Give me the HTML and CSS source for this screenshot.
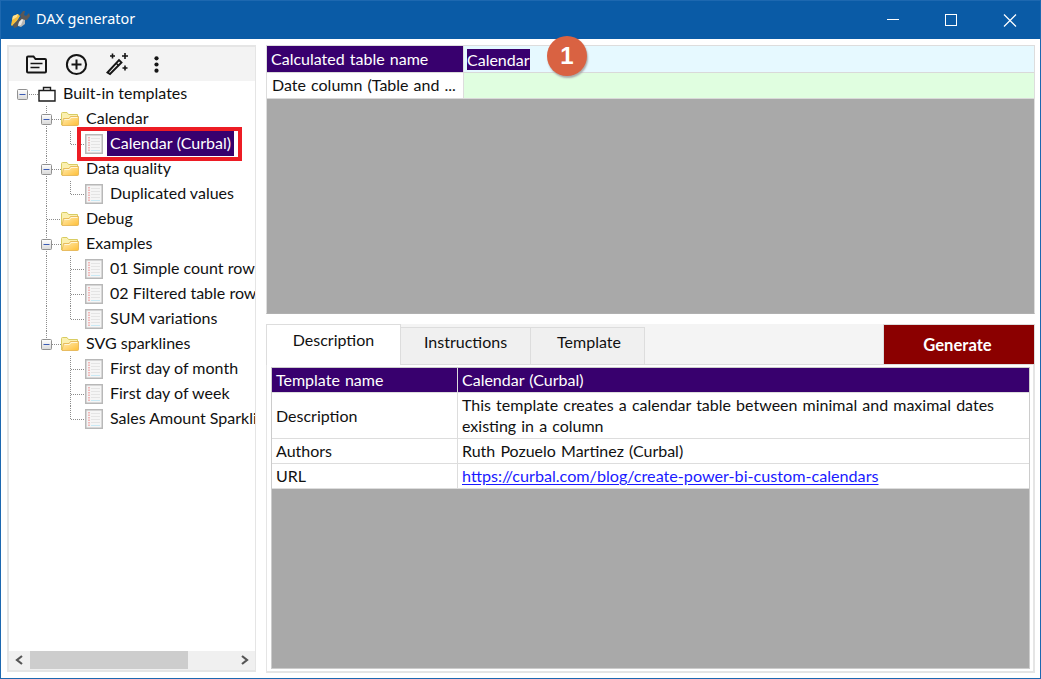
FILE: index.html
```html
<!DOCTYPE html>
<html lang="en">
<head>
<meta charset="utf-8">
<title>DAX generator</title>
<link rel="stylesheet" href="styles.css">
</head>
<body>
<svg class="defs" width="0" height="0">
  <defs>
    <linearGradient id="gold" x1="0" y1="0" x2="1" y2="1"><stop offset="0" stop-color="#ffeeb8"/><stop offset="1" stop-color="#ffbf36"/></linearGradient>
    <linearGradient id="boxfill" x1="0" y1="0" x2="0" y2="1"><stop offset="0" stop-color="#fff"/><stop offset="1" stop-color="#d8d8d8"/></linearGradient>
    <symbol id="minus" viewBox="0 0 11 11"><rect x=".5" y=".5" width="10" height="10" rx="1" fill="url(#boxfill)" stroke="#919191"/><path d="M2.500 5.500h6" stroke="#3c5cb4"/></symbol>
    <symbol id="folder" viewBox="0 0 18 14"><path d="M.5 13V1.500Q.5.5 1.500.5H6l1.500 2H16.500V5" fill="#fbf0b0" stroke="#d8cc62"/><path d="M1 13.500L2.500 6.500H8l1.500-2h8v8q0 1-1 1z" fill="url(#gold)" stroke="#e2b14c" stroke-width=".8"/><path d="M3.500 7.500h5L10 5.500h6.500" fill="none" stroke="#fff6d8"/></symbol>
    <symbol id="doc" viewBox="0 0 18 20"><rect x=".75" y=".75" width="16.500" height="18.500" fill="#f5f5f5" stroke="#b8b8b8" stroke-width="1.500"/><path d="M4 3v14" stroke="#f0a4a4" stroke-width="1.500" stroke-dasharray="1.500 1"/><path d="M6 4.500h9M6 7.500h9M6 10.500h9M6 13.500h9" stroke="#e4e4e4"/><path d="M6 16.500h9" stroke="#c9e9f5"/></symbol>
    <symbol id="case" viewBox="0 0 18 16"><path d="M1 4.500h16v10.500H1zM5.500 4V1.500h7V4" fill="none" stroke="#1c1c1c" stroke-width="1.400"/></symbol>
  </defs>
</svg>
<div class="window">
  <header class="titlebar">
    <svg class="app-icon" width="20" height="20" viewBox="0 0 20 20"><path d="M3 6l5-2 2 2-3 5-5 5-1-1z" fill="#f5bd3b"/><path d="M3 6l5-2-1 3-5 3z" fill="#ffe191"/><path d="M3 15l8-8-1-2 3-4 2 0-1 4 2 1 3-3 1 3-3 4-3 0-7 7-3 1z" fill="#5b5856"/><path d="M9 12l3-3 3 1v4l-4 3-3-1z" fill="#b5b5b3"/><path d="M9 12l3-3 1 1-2 5-3 1z" fill="#e9e9e6"/></svg>
    <h1>DAX generator</h1>
    <svg class="caption" width="160" height="38" viewBox="0 0 160 38" fill="none" stroke="#fff"><path d="M7 18.500h12"/><rect x="65.500" y="13.500" width="11" height="11"/><path d="M124 13.500l12 12M136 13.500l-12 12" stroke-width="1.200"/></svg>
  </header>
  <main class="content">
    <aside class="sidebar">
      <nav class="toolbar">
        <svg width="150" height="34" viewBox="0 0 150 34" fill="none" stroke="#151515" stroke-width="2">
          <path d="M18 10.500q0-1 1-1h5.500l2 2.500H36q1 0 1 1v11.500q0 1-1 1H19q-1 0-1-1z"/><path d="M21.500 16.500h12M21.500 20.500h9" stroke-width="1.700"/>
          <circle cx="67.500" cy="17.500" r="9.600"/><path d="M67.500 12.500v10M62.500 17.500h10"/>
          <path d="M98.500 25.500L110 13l2.500 2.500L101 27z" stroke-width="1.900"/><path d="M107 16l2.700 2.700" stroke-width="1.500"/>
          <path d="M103.500 6.500v5M101 9h5M116 6v6M113 9h6M116 18.500v5M113.500 21h5" stroke-width="1.600"/>
          <g fill="#151515" stroke="none"><circle cx="147.500" cy="11.300" r="2.100"/><circle cx="147.500" cy="17.500" r="2.100"/><circle cx="147.500" cy="23.700" r="2.100"/></g>
        </svg>
      </nav>
      <ul class="tree">
        <li><svg width="51" height="25"><path class="guide" d="M20 13.500h9"/><use href="#minus" x="8" y="8" width="11" height="11"/><use href="#case" x="29" y="5" width="18" height="16"/></svg><span>Built-in templates</span></li>
        <li><svg width="74" height="25"><path class="guide" d="M37.500 0V25M43 13.500h9"/><use href="#minus" x="32" y="8" width="11" height="11"/><use href="#folder" x="52" y="6" width="18" height="14"/></svg><span>Calendar</span></li>
        <li><svg width="98" height="25"><path class="guide" d="M37.500 0V25M61.500 0V13.500H76"/><use href="#doc" x="76" y="3" width="18" height="20"/></svg><span class="selected">Calendar (Curbal)</span></li>
        <li><svg width="74" height="25"><path class="guide" d="M37.500 0V25M43 13.500h9"/><use href="#minus" x="32" y="8" width="11" height="11"/><use href="#folder" x="52" y="6" width="18" height="14"/></svg><span>Data quality</span></li>
        <li><svg width="98" height="25"><path class="guide" d="M37.500 0V25M61.500 0V13.500H76"/><use href="#doc" x="76" y="3" width="18" height="20"/></svg><span>Duplicated values</span></li>
        <li><svg width="74" height="25"><path class="guide" d="M37.500 0V25M38 13.500h14"/><use href="#folder" x="52" y="6" width="18" height="14"/></svg><span>Debug</span></li>
        <li><svg width="74" height="25"><path class="guide" d="M37.500 0V25M43 13.500h9"/><use href="#minus" x="32" y="8" width="11" height="11"/><use href="#folder" x="52" y="6" width="18" height="14"/></svg><span>Examples</span></li>
        <li><svg width="98" height="25"><path class="guide" d="M37.500 0V25M61.500 0V25M62 13.500H76"/><use href="#doc" x="76" y="3" width="18" height="20"/></svg><span>01 Simple count rows</span></li>
        <li><svg width="98" height="25"><path class="guide" d="M37.500 0V25M61.500 0V25M62 13.500H76"/><use href="#doc" x="76" y="3" width="18" height="20"/></svg><span>02 Filtered table rows</span></li>
        <li><svg width="98" height="25"><path class="guide" d="M37.500 0V25M61.500 0V13.500H76"/><use href="#doc" x="76" y="3" width="18" height="20"/></svg><span>SUM variations</span></li>
        <li><svg width="74" height="25"><path class="guide" d="M37.500 0V8M43 13.500h9"/><use href="#minus" x="32" y="8" width="11" height="11"/><use href="#folder" x="52" y="6" width="18" height="14"/></svg><span>SVG sparklines</span></li>
        <li><svg width="98" height="25"><path class="guide" d="M61.500 0V25M62 13.500H76"/><use href="#doc" x="76" y="3" width="18" height="20"/></svg><span>First day of month</span></li>
        <li><svg width="98" height="25"><path class="guide" d="M61.500 0V25M62 13.500H76"/><use href="#doc" x="76" y="3" width="18" height="20"/></svg><span>First day of week</span></li>
        <li><svg width="98" height="25"><path class="guide" d="M61.500 0V13.500H76"/><use href="#doc" x="76" y="3" width="18" height="20"/></svg><span>Sales Amount Sparkli</span></li>
      </ul>
      <div class="scrollbar">
        <svg width="21" height="18" viewBox="0 0 21 18"><path d="M13 5l-5 4 5 4" fill="none" stroke="#555" stroke-width="2.200"/></svg>
        <div class="thumb"></div>
        <svg class="end" width="21" height="18" viewBox="0 0 21 18"><path d="M8 5l5 4-5 4" fill="none" stroke="#555" stroke-width="2.200"/></svg>
      </div>
    </aside>
    <section class="right">
      <div class="params">
        <div class="param head"><div class="name">Calculated table name</div><div class="value blue"><span class="edit">Calendar</span></div></div>
        <div class="param"><div class="name second">Date column (Table and ...</div><div class="value green"></div></div>
      </div>
      <div class="details">
        <div class="tabs">
          <div class="tab active">Description</div>
          <div class="tab instr">Instructions</div>
          <div class="tab templ">Template</div>
          <div class="filler"></div>
          <button class="generate">Generate</button>
        </div>
        <div class="page">
          <div class="info">
            <div class="row top"><div class="key">Template name</div><div class="val">Calendar (Curbal)</div></div>
            <div class="row tall"><div class="key">Description</div><div class="val">This template creates a calendar table between minimal and maximal dates<br>existing in a column</div></div>
            <div class="row"><div class="key">Authors</div><div class="val">Ruth Pozuelo Martinez (Curbal)</div></div>
            <div class="row"><div class="key">URL</div><div class="val"><a href="#">https://curbal.com/blog/create-power-bi-custom-calendars</a></div></div>
          </div>
        </div>
      </div>
    </section>
  </main>
  <div class="highlight"></div>
  <div class="step">1</div>
</div>
</body>
</html>
```
FILE: styles.css
```css
* { box-sizing: border-box; }
body { margin: 0; font: 16px/21px Lato, "Liberation Sans", sans-serif; color: #111; }
.defs { position: absolute; }
.window { position: relative; display: flex; flex-direction: column; width: 1041px; height: 679px; background: #fff; border: 1px solid #1d68b0; overflow: hidden; }
.titlebar { display: flex; align-items: center; height: 38px; flex: none; padding-left: 9px; background: #0a5ba6; color: #fff; }
.app-icon { flex: none; margin-right: 6px; }
.titlebar h1 { flex: 1; margin: 0; padding-bottom: 2px; font: 14.400px/36px "Noto Sans", sans-serif; }
.content { display: flex; flex: 1; min-height: 0; padding: 6px 5px 6px 6px; gap: 10px; }
.sidebar { display: flex; flex-direction: column; width: 249px; height: 627px; border: 2px solid #e5e5e5; border-right-width: 1px; }
.toolbar { height: 34px; flex: none; background: #f3f3f3; }
.toolbar svg { display: block; width: 150px; height: 34px; overflow: visible; }
.tree { flex: 1; margin: 0; padding: 0; list-style: none; overflow: hidden; }
.tree li { display: flex; height: 25px; white-space: nowrap; line-height: 23px; }
.tree svg { flex: none; }
.tree li span { height: 25px; padding: 0 3px; flex: none; }
.guide { fill: none; stroke: #8c8c8c; stroke-dasharray: 1 1; }
.tree .selected { background: #38006e; color: #fff; word-spacing: .5px; }
.scrollbar { display: flex; height: 19px; flex: none; background: #f0f0f0; border-bottom: 1px solid #f0f0f0; }
.thumb { width: 158px; background: #cdcdcd; }
.end { margin-left: auto; }
.right { display: flex; flex-direction: column; width: 769px; gap: 10px; }
.params { height: 269px; background: #a9a9a9; border: 1px solid #ddd; border-bottom-color: #b0b0b0; }
.param { display: flex; height: 26px; border-bottom: 1px solid #d9d9d9; background: #fff; line-height: 25px; word-spacing: 1px; }
.param.head { height: 27px; }
.name { width: 197px; padding-left: 4px; border-right: 1px solid #ddd; white-space: nowrap; }
.head .name { background: #38006e; color: #fff; }
.second { padding-left: 5px; line-height: 24px; }
.value { flex: 1; padding: 3px; }
.blue { background: #e6f9ff; }
.green { background: #e0fee0; }
.edit { display: block; width: 63px; height: 21px; line-height: 21px; background: #38006e; color: #fff; white-space: nowrap; }
.details { display: flex; flex-direction: column; height: 348px; }
.tabs { display: flex; align-items: flex-end; height: 41px; flex: none; background: #f4f4f4; }
.tab { text-align: center; }
.active { width: 135px; height: 41px; line-height: 30px; background: #fff; border: 1px solid #ddd; border-bottom: 0; }
.instr, .templ { height: 38px; line-height: 28px; background: #f0f0f0; border: 1px solid #ddd; border-left: 0; }
.instr { width: 130px; }
.templ { width: 114px; padding-left: 3px; }
.filler { flex: 1; height: 41px; border-bottom: 1px solid #ddd; }
.generate { width: 152px; height: 41px; padding: 0; border: 1px solid #ddd; background: #8b0000; color: #fff; font: bold 16.600px/36px Lato, sans-serif; padding-right: 3px; }
.page { flex: 1; padding: 2px 3px 2px 4px; border: 0 solid #e5e5e5; border-width: 0 2px 2px 1px; }
.info { height: 302px; width: 759px; background: #a9a9a9; border: 1px solid #ccc; word-spacing: 1px; }
.row { display: flex; height: 25px; border-bottom: 1px solid #ddd; background: #fff; line-height: 24px; }
.key { width: 186px; padding-left: 4px; border-right: 1px solid #ddd; }
.val { padding-left: 4px; white-space: nowrap; }
.top { background: #38006e; color: #fff; }
.tall { height: 46px; line-height: 45px; }
.tall .val { line-height: 21px; padding-top: 1px; }
a { color: #1a1aff; font-size: 16.160px; text-decoration: underline; text-underline-offset: 2px; }
.highlight { position: absolute; left: 76px; top: 126px; width: 165px; height: 34px; border: 4px solid #ed1c24; }
.step { position: absolute; left: 546px; top: 35px; width: 40px; height: 40px; border-radius: 50%; background: #d96242; color: #fff; font: bold 24px/39px "Liberation Sans", sans-serif; text-align: center; box-shadow: 1px 2px 2px #aaa; }
```
